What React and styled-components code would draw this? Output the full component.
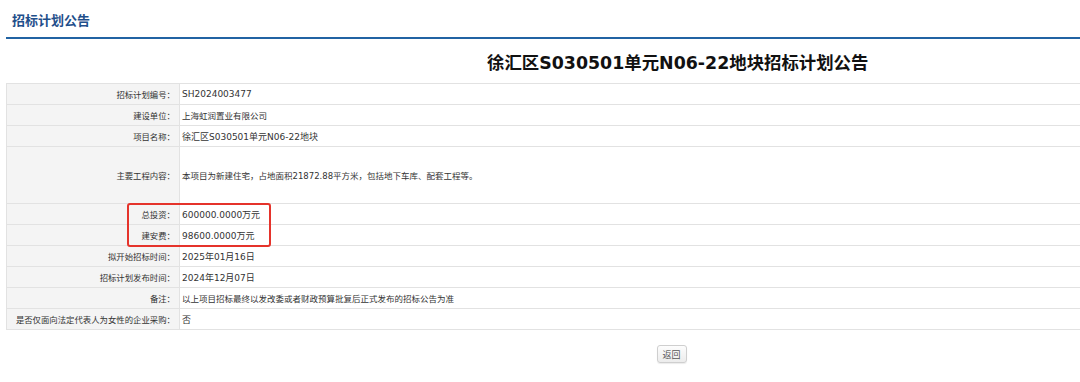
import styled, { createGlobalStyle } from 'styled-components';

const GlobalStyle = createGlobalStyle`
  html, body {
    margin: 0;
    padding: 0;
    background: #ffffff;
  }
  body {
    font-family: "DejaVu Sans", "Noto Sans CJK SC", sans-serif;
    color: #333333;
    overflow: hidden;
  }
`;

const Page = styled.div`
  width: 1080px;
  height: 382px;
  display: flex;
  flex-direction: column;
`;

const Header = styled.div`
  margin-left: 6px;
  height: 39px;
  padding: 2px 0 0 6px;
  border-bottom: 2px solid #2163a3;
  display: flex;
  align-items: center;
  box-sizing: border-box;
`;

const HeaderTitle = styled.h2`
  margin: 0;
  font-family: "Noto Sans CJK SC", sans-serif;
  font-size: 13px;
  font-weight: 700;
  color: #1f4f8b;
`;

const TitleRow = styled.div`
  height: 44px;
  display: flex;
  align-items: center;
  padding: 1px 0 0 487px;
  box-sizing: border-box;
`;

const Title = styled.h1`
  margin: 0;
  font-family: "DejaVu Sans", "Noto Sans CJK SC", sans-serif;
  font-size: 17.4px;
  font-weight: 700;
  color: #111111;
`;

const TableWrap = styled.div`
  position: relative;
  margin-left: 6px;
`;

const Table = styled.table`
  width: 100%;
  border-collapse: collapse;
  table-layout: fixed;
`;

const Row = styled.tr`
  height: ${p => p.$tall ? 57 : 21}px;
`;

const Label = styled.td`
  width: 173px;
  background: #f4f4f4;
  border: 1px solid #e2e2e2;
  text-align: right;
  padding: 0 4px 0 0;
  font-size: 8.4px;
  color: #333333;
  box-sizing: border-box;
  white-space: nowrap;
  vertical-align: middle;
`;

const Value = styled.td`
  border: 1px solid #e2e2e2;
  border-right: none;
  padding: 0 0 0 2px;
  font-size: ${p => p.$cjk ? 8.5 : 9}px;
  color: #333333;
  white-space: nowrap;
  vertical-align: middle;
`;

const Highlight = styled.div`
  position: absolute;
  left: 121px;
  top: 120px;
  width: 144px;
  height: 44px;
  border: 2px solid #e5332b;
  border-radius: 3px;
  box-sizing: border-box;
  pointer-events: none;
`;

const Footer = styled.div`
  display: flex;
  justify-content: center;
  padding: 15px 0 0 263px;
`;

const BackButton = styled.button`
  width: 30px;
  height: 18px;
  padding: 0;
  font-family: "Noto Sans CJK SC", sans-serif;
  font-size: 9px;
  color: #555555;
  background: linear-gradient(#fdfdfd, #ececec);
  border: 1px solid #cfcfcf;
  border-radius: 3px;
  box-shadow: 0 1px 1px rgba(0, 0, 0, 0.08);
`;

const rows = [
  { label: '招标计划编号：', value: 'SH2024003477' },
  { label: '建设单位：', value: '上海虹润置业有限公司', cjk: true },
  { label: '项目名称：', value: '徐汇区S030501单元N06-22地块' },
  { label: '主要工程内容：', value: '本项目为新建住宅，占地面积21872.88平方米，包括地下车库、配套工程等。', tall: true, cjk: true },
  { label: '总投资：', value: '600000.0000万元' },
  { label: '建安费：', value: '98600.0000万元' },
  { label: '拟开始招标时间：', value: '2025年01月16日' },
  { label: '招标计划发布时间：', value: '2024年12月07日' },
  { label: '备注：', value: '以上项目招标最终以发改委或者财政预算批复后正式发布的招标公告为准', cjk: true },
  { label: '是否仅面向法定代表人为女性的企业采购：', value: '否' },
];

export default function App() {
  return (
    <Page>
      <GlobalStyle />
      <Header>
        <HeaderTitle>招标计划公告</HeaderTitle>
      </Header>
      <TitleRow>
        <Title>徐汇区S030501单元N06-22地块招标计划公告</Title>
      </TitleRow>
      <TableWrap>
        <Table>
          <tbody>
            {rows.map(r => (
              <Row key={r.label} $tall={r.tall}>
                <Label>{r.label}</Label>
                <Value $cjk={r.cjk}>{r.value}</Value>
              </Row>
            ))}
          </tbody>
        </Table>
        <Highlight />
      </TableWrap>
      <Footer>
        <BackButton>返回</BackButton>
      </Footer>
    </Page>
  );
}
